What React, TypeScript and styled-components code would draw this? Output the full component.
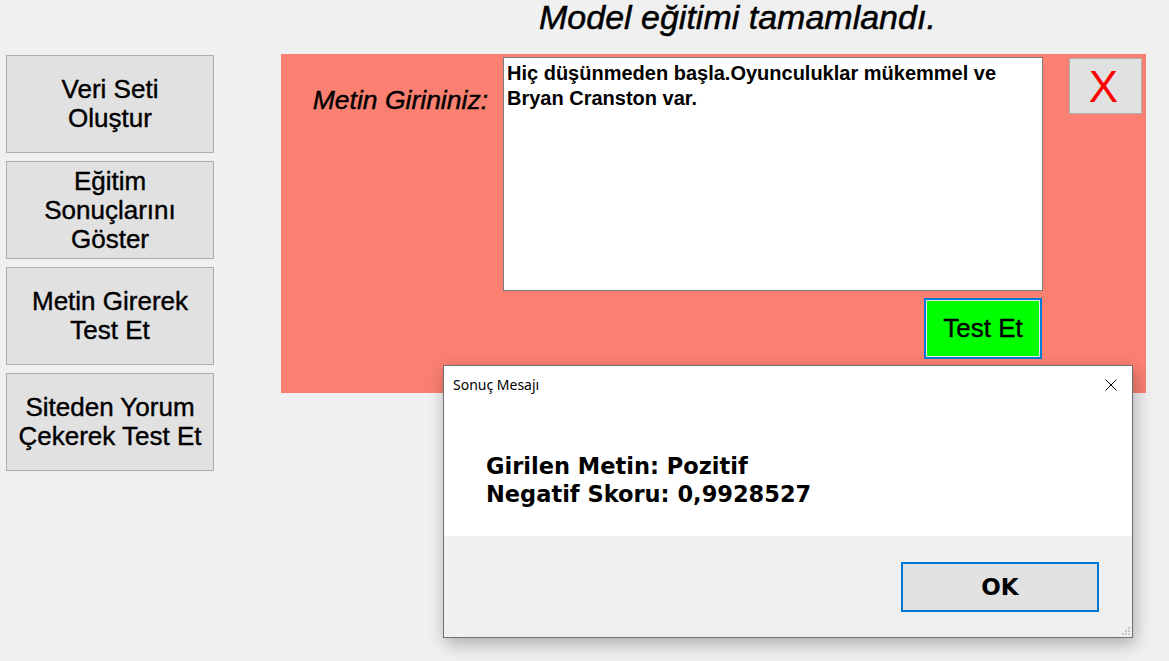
import React from "react";
import styled, { createGlobalStyle } from "styled-components";

const Global = createGlobalStyle`
  html, body { margin: 0; padding: 0; }
  body {
    background: #f0f0f0;
    font-family: "Liberation Sans", Arial, sans-serif;
    overflow: hidden;
  }
`;

const Page = styled.div`
  position: relative;
  width: 1169px;
  height: 661px;
  display: flex;
  flex-direction: row;
  background: #f0f0f0;
`;

const Sidebar = styled.div`
  width: 281px;
  box-sizing: border-box;
  padding: 55px 0 0 6px;
  display: flex;
  flex-direction: column;
  gap: 8px;
`;

const SideButton = styled.button`
  width: 208px;
  height: 98px;
  box-sizing: border-box;
  background: #e1e1e1;
  border: 1px solid #adadad;
  margin: 0;
  padding: 0 2px;
  font-family: "Liberation Sans", Arial, sans-serif;
  font-size: 26px;
  line-height: 29px;
  -webkit-text-stroke: 0.4px #000;
  color: #000;
  text-align: center;
`;

const Main = styled.div`
  display: flex;
  flex-direction: column;
`;

const Title = styled.h1`
  margin: 0;
  height: 54px;
  padding-left: 258px;
  font-family: "Liberation Sans", Arial, sans-serif;
  font-style: italic;
  font-weight: normal;
  font-size: 34px;
  line-height: 35px;
  -webkit-text-stroke: 0.5px #000;
  color: #000;
`;

const Panel = styled.div`
  width: 865px;
  height: 339px;
  box-sizing: border-box;
  background: #fa8072;
  padding-top: 3px;
  display: grid;
  grid-template-columns: 222px 540px 26px 73px;
  grid-template-rows: 234px 61px;
  row-gap: 7px;
  align-items: start;
`;

const Label = styled.label`
  grid-column: 1;
  grid-row: 1;
  margin-top: 28px;
  padding-right: 15px;
  text-align: right;
  font-style: italic;
  font-size: 26.5px;
  line-height: 30px;
  -webkit-text-stroke: 0.4px #000;
  color: #000;
`;

const TextArea = styled.textarea`
  grid-column: 2;
  grid-row: 1;
  width: 540px;
  height: 234px;
  box-sizing: border-box;
  margin: 0;
  border: 1px solid #7a7a7a;
  background: #fff;
  padding: 3px 3px;
  resize: none;
  outline: none;
  font-family: "Liberation Sans", Arial, sans-serif;
  font-weight: bold;
  font-size: 20px;
  line-height: 25px;
  color: #000;
  overflow: hidden;
`;

const CloseButton = styled.button`
  grid-column: 4;
  grid-row: 1;
  margin: 1px 0 0 0;
  width: 73px;
  height: 56px;
  box-sizing: border-box;
  background: #e1e1e1;
  border: 1px solid #adadad;
  padding: 0 4px 0 0;
  font-family: "Liberation Sans", Arial, sans-serif;
  font-size: 44px;
  line-height: 56px;
  color: #ff0000;
`;

const TestButton = styled.button`
  grid-column: 2;
  grid-row: 2;
  justify-self: end;
  margin-right: 1px;
  width: 118px;
  height: 61px;
  box-sizing: border-box;
  background: #00ff00;
  border: 2px solid #0078d7;
  box-shadow: inset 0 0 0 1px #e8e8e8;
  padding: 0;
  font-family: "Liberation Sans", Arial, sans-serif;
  font-size: 26px;
  -webkit-text-stroke: 0.4px #000;
  color: #000;
`;

const Dialog = styled.div`
  position: absolute;
  left: 443px;
  top: 365px;
  width: 690px;
  height: 273px;
  box-sizing: border-box;
  border: 1px solid #707070;
  background: #f0f0f0;
  box-shadow: 2px 6px 16px rgba(0, 0, 0, 0.28);
  display: flex;
  flex-direction: column;
`;

const TitleBar = styled.div`
  height: 37px;
  background: #fff;
  display: flex;
  align-items: center;
  justify-content: space-between;
  padding: 0 15px 0 9px;
  font-family: "Noto Sans", "Open Sans", sans-serif;
  font-size: 14px;
  color: #000;
`;

const TitleClose = styled.svg`
  display: block;
`;

const Body = styled.div`
  height: 133px;
  background: #fff;
  box-sizing: border-box;
  padding: 49px 0 0 42px;
  font-family: "DejaVu Sans", Verdana, sans-serif;
  font-weight: bold;
  font-size: 22.5px;
  line-height: 28px;
  color: #000;
`;

const Line = styled.div`
  white-space: nowrap;
`;

const Footer = styled.div`
  position: relative;
  flex: 1;
  display: flex;
  justify-content: flex-end;
  align-items: flex-start;
  padding: 26px 33px 0 0;
`;

const OkButton = styled.button`
  width: 198px;
  height: 50px;
  box-sizing: border-box;
  background: #e1e1e1;
  border: 2px solid #0078d7;
  padding: 0;
  font-family: "DejaVu Sans", Verdana, sans-serif;
  font-weight: bold;
  font-size: 23px;
  color: #000;
`;

const Grip = styled.svg`
  position: absolute;
  right: 1px;
  bottom: 1px;
`;

export default function App() {
  return (
    <>
      <Global />
      <Page>
        <Sidebar>
          <SideButton>Veri Seti<br />Oluştur</SideButton>
          <SideButton>Eğitim<br />Sonuçlarını<br />Göster</SideButton>
          <SideButton>Metin Girerek<br />Test Et</SideButton>
          <SideButton>Siteden Yorum<br />Çekerek Test Et</SideButton>
        </Sidebar>
        <Main>
          <Title>Model eğitimi tamamlandı.</Title>
          <Panel>
            <Label>Metin Girininiz:</Label>
            <TextArea
              readOnly
              defaultValue="Hiç düşünmeden başla.Oyunculuklar mükemmel ve Bryan Cranston var."
            />
            <CloseButton>X</CloseButton>
            <TestButton>Test Et</TestButton>
          </Panel>
        </Main>
        <Dialog>
          <TitleBar>
            <span>Sonuç Mesajı</span>
            <TitleClose width="12" height="12" viewBox="0 0 12 12">
              <path d="M0.5 0.5 L11.5 11.5 M11.5 0.5 L0.5 11.5" stroke="#000" strokeWidth="1" fill="none" />
            </TitleClose>
          </TitleBar>
          <Body>
            <Line>Girilen Metin: Pozitif</Line>
            <Line>Negatif Skoru: 0,9928527</Line>
          </Body>
          <Footer>
            <OkButton>OK</OkButton>
            <Grip width="10" height="10" viewBox="0 0 10 10">
              <rect x="7" y="1" width="2" height="2" fill="#c8c8c8" />
              <rect x="4" y="4" width="2" height="2" fill="#c8c8c8" />
              <rect x="7" y="4" width="2" height="2" fill="#c8c8c8" />
              <rect x="1" y="7" width="2" height="2" fill="#c8c8c8" />
              <rect x="4" y="7" width="2" height="2" fill="#c8c8c8" />
              <rect x="7" y="7" width="2" height="2" fill="#c8c8c8" />
            </Grip>
          </Footer>
        </Dialog>
      </Page>
    </>
  );
}
